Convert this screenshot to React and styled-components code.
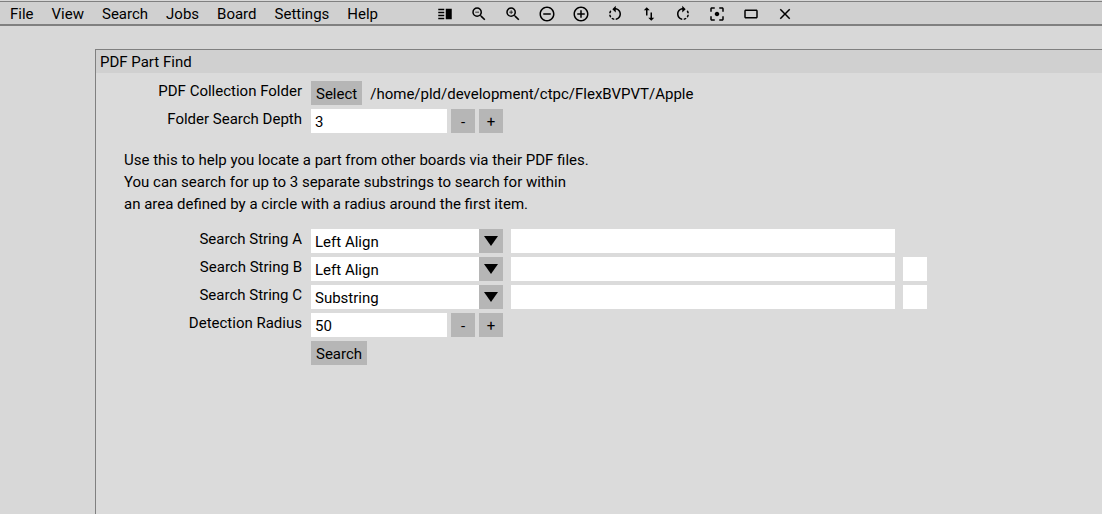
import React, { useState } from 'react'
import styled, { createGlobalStyle } from 'styled-components'
import {
    MdVerticalSplit,
    MdZoomOut,
    MdZoomIn,
    MdRemoveCircleOutline,
    MdAddCircleOutline,
    MdRotateLeft,
    MdImportExport,
    MdRotateRight,
    MdFilterCenterFocus,
    MdCrop32,
    MdClose,
} from 'react-icons/md'

const menus = ['File', 'View', 'Search', 'Jobs', 'Board', 'Settings', 'Help']

const tools = [
    { label: 'Toggle side panel', icon: MdVerticalSplit },
    { label: 'Zoom out', icon: MdZoomOut },
    { label: 'Zoom in', icon: MdZoomIn },
    { label: 'Decrease', icon: MdRemoveCircleOutline },
    { label: 'Increase', icon: MdAddCircleOutline },
    { label: 'Rotate left', icon: MdRotateLeft },
    { label: 'Flip board', icon: MdImportExport },
    { label: 'Rotate right', icon: MdRotateRight },
    { label: 'Center', icon: MdFilterCenterFocus },
    { label: 'Fit', icon: MdCrop32 },
    { label: 'Close', icon: MdClose },
]

const searchStrings = [
    { id: 'A', mode: 'Left Align' },
    { id: 'B', mode: 'Left Align', toggle: true },
    { id: 'C', mode: 'Substring', toggle: true },
]

function Stepper({ id, label, initial }) {
    const [value, setValue] = useState(initial)

    return (
        <Row>
            <Label htmlFor={id}>{label}</Label>
            <StepperControls>
                <NumberInput id={id} value={value} onChange={e => setValue(e.target.value)} />
                <StepButton aria-label={`Decrease ${label}`} onClick={() => setValue(Number(value) - 1)}>-</StepButton>
                <StepButton aria-label={`Increase ${label}`} onClick={() => setValue(Number(value) + 1)}>+</StepButton>
            </StepperControls>
        </Row>
    )
}

export default function App() {
    return (
        <>
            <GlobalStyle />
            <MenuBar>
                <Menus>
                    {menus.map(name => <MenuButton key={name}>{name}</MenuButton>)}
                </Menus>
                <Tools>
                    {tools.map(({ label, icon: Icon }) => (
                        <ToolButton key={label} aria-label={label}><Icon /></ToolButton>
                    ))}
                </Tools>
            </MenuBar>
            <Panel>
                <PanelTitle>PDF Part Find</PanelTitle>
                <Form>
                    <Row>
                        <Label htmlFor="folder">PDF Collection Folder</Label>
                        <Controls>
                            <Button id="folder">Select</Button>
                            <FolderPath>/home/pld/development/ctpc/FlexBVPVT/Apple</FolderPath>
                        </Controls>
                    </Row>
                    <Stepper id="depth" label="Folder Search Depth" initial={3} />
                    <Help>
                        Use this to help you locate a part from other boards via their PDF files.
                        <br />
                        You can search for up to 3 separate substrings to search for within
                        <br />
                        an area defined by a circle with a radius around the first item.
                    </Help>
                    {searchStrings.map(({ id, mode, toggle }) => (
                        <Row key={id}>
                            <Label htmlFor={`mode-${id}`}>Search String {id}</Label>
                            <Controls>
                                <SelectWrapper>
                                    <Select id={`mode-${id}`} defaultValue={mode}>
                                        <option>Left Align</option>
                                        <option>Substring</option>
                                    </Select>
                                    <SelectArrow>
                                        <svg viewBox="0 0 14 10"><path d="M0 0h14L7 10z" /></svg>
                                    </SelectArrow>
                                </SelectWrapper>
                                <TextInput aria-label={`Search String ${id}`} />
                                {toggle && <Checkbox type="checkbox" aria-label={`Use Search String ${id}`} />}
                            </Controls>
                        </Row>
                    ))}
                    <Stepper id="radius" label="Detection Radius" initial={50} />
                    <Row>
                        <span />
                        <Controls>
                            <Button>Search</Button>
                        </Controls>
                    </Row>
                </Form>
            </Panel>
        </>
    )
}

const GlobalStyle = createGlobalStyle`
    * {
        box-sizing: border-box;
    }
    body {
        margin: 0;
        background: #d8d8d8;
        color: black;
        font: 15px/24px Roboto, sans-serif;
    }
    #root {
        display: flex;
        flex-direction: column;
        min-height: 100vh;
    }
    button, input, select {
        margin: 0;
        border: none;
        border-radius: 0;
        color: inherit;
        font: inherit;
    }
`

const MenuBar = styled.header`
    display: flex;
    align-items: center;
    gap: 58px;
    margin-top: 1px;
    padding: 2px 0 0 10px;
    background: #d0d0d0;
    border-top: 1px solid #808080;
    border-bottom: 2px solid #808080;
`

const Menus = styled.nav`
    display: flex;
    gap: 18px;
`

const MenuButton = styled.button`
    padding: 0;
    background: none;
    line-height: 20px;
`

const Tools = styled.div`
    display: flex;
    gap: 16px;
`

const ToolButton = styled.button`
    display: flex;
    padding: 0;
    background: none;
    > svg {
        width: 18px;
        height: 18px;
    }
`

const Panel = styled.main`
    flex: 1;
    margin: 23px 0 0 95px;
    background: #dbdbdb;
    border-top: 1px solid #808080;
    border-left: 1px solid #808080;
`

const PanelTitle = styled.h1`
    margin: 0;
    padding: 1px 0 0 4px;
    background: #d0d0d0;
    font-size: 15px;
    font-weight: normal;
    line-height: 22px;
`

const Form = styled.div`
    display: flex;
    flex-direction: column;
    gap: 4px;
    padding: 8px 0;
`

const Row = styled.div`
    display: grid;
    grid-template-columns: 206px 1fr;
    column-gap: 9px;
`

const Label = styled.label`
    line-height: 20px;
    text-align: right;
`

const Controls = styled.div`
    display: flex;
    gap: 8px;
`

const StepperControls = styled(Controls)`
    gap: 4px;
`

const Button = styled.button`
    height: 24px;
    padding: 2px 5px 0;
    background: #b6b6b6;
    line-height: 22px;
`

const StepButton = styled(Button)`
    width: 24px;
`

const FolderPath = styled.span`
    padding-top: 2px;
    line-height: 22px;
`

const TextInput = styled.input`
    width: 384px;
    height: 24px;
    padding: 2px 4px 0;
    background: white;
`

const NumberInput = styled(TextInput)`
    width: 136px;
`

const Help = styled.p`
    margin: 12px 28px 10px;
    line-height: 22px;
`

const SelectWrapper = styled.div`
    position: relative;
    width: 192px;
`

const Select = styled.select`
    display: block;
    appearance: none;
    width: 100%;
    height: 24px;
    padding: 2px 28px 0 4px;
    background: white;
    line-height: 22px;
`

const SelectArrow = styled.span`
    position: absolute;
    top: 0;
    right: 0;
    display: flex;
    align-items: center;
    justify-content: center;
    width: 24px;
    height: 24px;
    background: #b6b6b6;
    pointer-events: none;
    > svg {
        width: 14px;
        height: 10px;
    }
`

const Checkbox = styled.input`
    appearance: none;
    width: 24px;
    height: 24px;
    background: white;
    &:checked {
        box-shadow: inset 0 0 0 6px white;
        background: black;
    }
`
